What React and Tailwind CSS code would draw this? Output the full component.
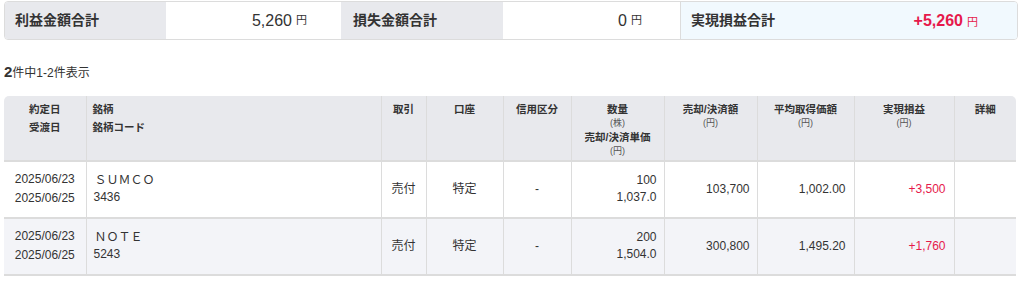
const FONT = '"Liberation Sans", Arial, "Noto Sans CJK JP", sans-serif'

const ROWS = [
  {
    trade: '2025/06/23',
    settle: '2025/06/25',
    name: 'ＳＵＭＣＯ',
    code: '3436',
    side: '売付',
    account: '特定',
    credit: '-',
    qty: '100',
    unit: '1,037.0',
    amount: '103,700',
    avg: '1,002.00',
    pl: '+3,500',
  },
  {
    trade: '2025/06/23',
    settle: '2025/06/25',
    name: 'ＮＯＴＥ',
    code: '5243',
    side: '売付',
    account: '特定',
    credit: '-',
    qty: '200',
    unit: '1,504.0',
    amount: '300,800',
    avg: '1,495.20',
    pl: '+1,760',
  },
]

const WIDTHS = [82, 295, 45, 77, 68, 93, 93, 97, 100, 62]

function Yen({ className = '' }) {
  return <span className={`ml-[4px] text-[11px] ${className}`}>円</span>
}

function Summary() {
  return (
    <div className="ml-[4px] mt-[1px] grid h-[39px] w-[1014px] grid-cols-[336px_340px_1fr] overflow-hidden rounded-[4px] border border-[#dcdcdc]">
      <div className="flex">
        <div className="flex w-[161px] items-center bg-[#e8e9ed] pl-[10px] text-[14px] font-bold text-[#333]">利益金額合計</div>
        <div className="flex flex-1 items-center justify-end bg-white pr-[34px] text-[16px] text-[#333]">
          5,260<Yen />
        </div>
      </div>
      <div className="flex border-r border-[#dcdcdc]">
        <div className="flex w-[162px] items-center bg-[#e8e9ed] pl-[12px] text-[14px] font-bold text-[#333]">損失金額合計</div>
        <div className="flex flex-1 items-center justify-end bg-white pr-[38px] text-[16px] text-[#333]">
          0<Yen />
        </div>
      </div>
      <div className="flex items-center justify-between bg-[#f1f9fe] pl-[10px] pr-[39px]">
        <span className="text-[14px] font-bold text-[#333]">実現損益合計</span>
        <span className="text-[16px] font-bold text-[#e6194b]">
          +5,260<Yen className="font-normal" />
        </span>
      </div>
    </div>
  )
}

function Head({ children, align = 'center', className = '' }) {
  return (
    <th
      className={`border-r border-[#dcdcdc] px-[6px] pt-[4px] align-top text-[10.5px] font-bold leading-[18px] text-[#333] last:border-r-0 ${
        align === 'left' ? 'text-left' : 'text-center'
      } ${className}`}
    >
      {children}
    </th>
  )
}

function Sub({ children }) {
  return <div className="text-[9px] font-normal leading-[10px] text-[#555]">{children}</div>
}

function Cell({ children, align = 'right', className = '' }) {
  const a = align === 'left' ? 'text-left' : align === 'center' ? 'text-center' : 'text-right'
  return (
    <td className={`border-r border-[#dcdcdc] px-[7px] align-middle text-[12px] text-[#333] last:border-r-0 ${a} ${className}`}>
      {children}
    </td>
  )
}

export default function App() {
  return (
    <div className="h-[287px] w-[1024px] bg-white" style={{ fontFamily: FONT }}>
      <Summary />

      <div className="ml-[4px] mt-[21px] flex items-baseline text-[#333]">
        <span className="text-[15px] font-bold">2</span>
        <span className="text-[12px]">件中1-2件表示</span>
      </div>

      <table className="ml-[4px] mt-[12px] w-[1012px] table-fixed border-collapse overflow-hidden rounded-t-[5px]">
        <colgroup>
          {WIDTHS.map((w, i) => (
            <col key={i} style={{ width: w }} />
          ))}
        </colgroup>
        <thead>
          <tr className="h-[65px] border-b-2 border-[#dcdcdc] bg-[#e8e9ed]">
            <Head>
              <div>約定日</div>
              <div>受渡日</div>
            </Head>
            <Head align="left">
              <div>銘柄</div>
              <div>銘柄コード</div>
            </Head>
            <Head>取引</Head>
            <Head>口座</Head>
            <Head>信用区分</Head>
            <Head>
              <div>数量</div>
              <Sub>(株)</Sub>
              <div>売却/決済単価</div>
              <Sub>(円)</Sub>
            </Head>
            <Head>
              <div>売却/決済額</div>
              <Sub>(円)</Sub>
            </Head>
            <Head>
              <div>平均取得価額</div>
              <Sub>(円)</Sub>
            </Head>
            <Head>
              <div>実現損益</div>
              <Sub>(円)</Sub>
            </Head>
            <Head>詳細</Head>
          </tr>
        </thead>
        <tbody>
          {ROWS.map((r, i) => (
            <tr key={r.code} className={`h-[57px] border-b-2 border-[#dcdcdc] ${i % 2 ? 'bg-[#f3f4f8]' : 'bg-white'}`}>
              <Cell align="center" className="leading-[19px]">
                <div>{r.trade}</div>
                <div>{r.settle}</div>
              </Cell>
              <Cell align="left" className="leading-[17px]">
                <div className="pl-[1px]">{r.name}</div>
                <div>{r.code}</div>
              </Cell>
              <Cell align="center">{r.side}</Cell>
              <Cell align="center">{r.account}</Cell>
              <Cell align="center">{r.credit}</Cell>
              <Cell className="leading-[17px]">
                <div>{r.qty}</div>
                <div>{r.unit}</div>
              </Cell>
              <Cell>{r.amount}</Cell>
              <Cell className="pr-[8px]">{r.avg}</Cell>
              <Cell className="pr-[8px] text-[#e6194b]">{r.pl}</Cell>
              <Cell />
            </tr>
          ))}
        </tbody>
      </table>
    </div>
  )
}
